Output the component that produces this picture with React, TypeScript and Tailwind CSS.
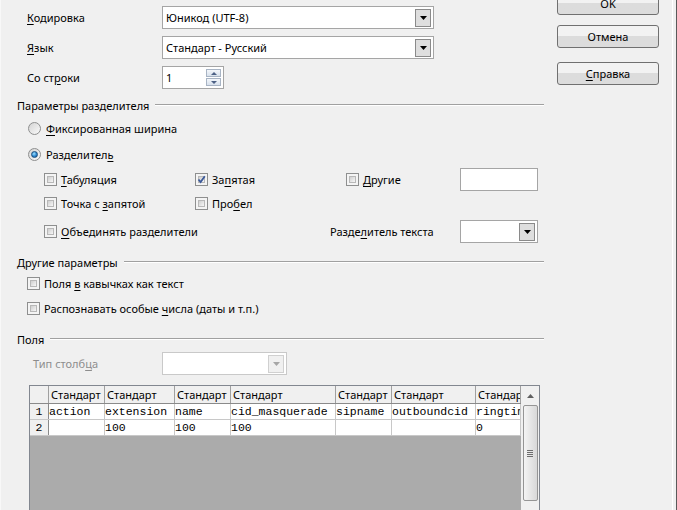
import React from 'react';

const Box = ({ checked }: { checked?: boolean }) => (
  <span className="relative flex h-[13px] w-[13px] shrink-0 border border-[#8e8f8f] bg-[#f4f4f4]">
    <span className="absolute inset-[2px] border border-[#b8b8b8] bg-linear-to-br from-[#cfcfcf] to-[#f7f7f7]" />
    {checked && (
      <svg className="absolute left-[1px] top-[1px]" width="9" height="9" viewBox="0 0 9 9">
        <path d="M1.5 4.5 L3.6 7 L7.8 1.2" fill="none" stroke="#3c5a9a" strokeWidth="1.8" />
      </svg>
    )}
  </span>
);

const Radio = ({ on }: { on?: boolean }) => (
  <span className="relative flex h-[13px] w-[13px] shrink-0 items-center justify-center rounded-full border border-[#8e8f8f] bg-linear-to-br from-[#d4d4d4] to-[#fafafa]">
    {on && (
      <span className="h-[7px] w-[7px] rounded-full border border-[#1b4f7e] bg-[radial-gradient(circle_at_40%_35%,#9fe2ff,#2b86cf_55%,#15508a)]" />
    )}
  </span>
);

const Arrow = ({ disabled }: { disabled?: boolean }) => (
  <span
    className={
      'flex h-[18px] w-[16px] items-center justify-center border ' +
      (disabled ? 'border-[#d0d0d0] bg-[#f0f0f0]' : 'border-[#8a8a8a] bg-[#dedede]')
    }
  >
    <svg width="7" height="4" viewBox="0 0 7 4">
      <path d="M0 0h7L3.5 4z" fill={disabled ? '#a6a6a6' : '#000'} />
    </svg>
  </span>
);

const Select = ({ value, width, disabled }: { value?: string; width: string; disabled?: boolean }) => (
  <div
    className={
      'flex h-[23px] items-center justify-between border bg-white pl-[3px] pr-[2px] ' +
      width +
      (disabled ? ' border-[#c9c9c9]' : ' border-[#a5a5a5]')
    }
  >
    <span className="whitespace-nowrap">{value}</span>
    <Arrow disabled={disabled} />
  </div>
);

const Section = ({ title, cls }: { title: string; cls: string }) => (
  <div className={'flex h-[16px] items-center gap-[6px] pl-[15px] ' + cls}>
    <span className="whitespace-nowrap">{title}</span>
    <div className="h-[2px] flex-1 border-t border-[#a0a0a0] border-b border-b-white" />
  </div>
);

const Btn = ({ children, cls = '' }: { children: React.ReactNode; cls?: string }) => (
  <div
    className={
      'flex h-[23px] w-[102px] shrink-0 items-center justify-center rounded-[3px] border border-[#707070] bg-linear-to-b from-[#f2f2f2] from-50% to-[#dcdcdc] to-50% ' +
      cls
    }
  >
    {children}
  </div>
);

const cols = [19, 56, 70, 56, 105, 56, 84, 45];
const head = ['', 'Стандарт', 'Стандарт', 'Стандарт', 'Стандарт', 'Стандарт', 'Стандарт', 'Стандарт'];
const rows = [
  ['1', 'action', 'extension', 'name', 'cid_masquerade', 'sipname', 'outboundcid', 'ringtime'],
  ['2', '', '100', '100', '100', '', '', '0'],
];

const Grid = () => (
  <div className="ml-[27px] mt-[10px] flex h-[150px] w-[511px] border border-[#828790] bg-[#ababab]">
    <div className="flex flex-1 flex-col overflow-hidden">
      <div className="flex h-[18px] shrink-0 border-b border-[#8a8a8a] bg-[#f0f0f0]">
        {head.map((h, i) => (
          <div
            key={i}
            style={{ width: cols[i] }}
            className="shrink-0 overflow-hidden whitespace-nowrap border-r border-[#a0a0a0] pl-[2px] leading-[17px]"
          >
            {h}
          </div>
        ))}
      </div>
      {rows.map((r, ri) => (
        <div key={ri} className="flex h-[16px] shrink-0 border-b border-[#c8c8c8] bg-white">
          {r.map((c, i) => (
            <div
              key={i}
              style={{ width: cols[i] }}
              className={
                'shrink-0 overflow-hidden whitespace-nowrap font-["Liberation_Mono",monospace] text-[11.5px] leading-[16px] ' +
                (i === 0
                  ? 'border-r border-[#8a8a8a] bg-[#f0f0f0] text-center'
                  : 'border-r border-[#c8c8c8]')
              }
            >
              {c}
            </div>
          ))}
        </div>
      ))}
    </div>
    <div className="flex w-[18px] shrink-0 flex-col items-center bg-[#f0f0f0]">
      <div className="flex h-[19px] shrink-0 items-center justify-center">
        <svg width="7" height="4" viewBox="0 0 7 4">
          <path d="M0 4h7L3.5 0z" fill="#606060" />
        </svg>
      </div>
      <div className="flex h-[96px] w-[15px] shrink-0 items-center justify-center rounded-[2px] border border-[#959595] bg-linear-to-r from-[#f4f4f4] to-[#d8d8d8]">
        <div className="flex w-[6px] flex-col gap-[1px]">
          <div className="h-px bg-[#6e6e6e]" />
          <div className="h-px bg-[#6e6e6e]" />
          <div className="h-px bg-[#6e6e6e]" />
          <div className="h-px bg-[#6e6e6e]" />
        </div>
      </div>
    </div>
  </div>
);

export default function App() {
  return (
    <div className="flex h-[510px] w-[677px] overflow-hidden bg-[#f0f0f0] font-['Noto_Sans',sans-serif] text-[11px] leading-none text-black">
      <div className="w-[2px] shrink-0 border-l border-[#f8f8f8]" />
      {/* left column: plain block flow so rows keep their heights */}
      <div className="w-[542px] shrink-0 pt-[6px]">
        <div className="flex h-[23px] items-center pl-[25px]">
          <span className="w-[135px]">
            <u className="underline-offset-2">К</u>одировка
          </span>
          <Select value="Юникод (UTF-8)" width="w-[272px]" />
        </div>
        <div className="mt-[7px] flex h-[23px] items-center pl-[25px]">
          <span className="w-[135px]">
            <u className="underline-offset-2">Я</u>зык
          </span>
          <Select value="Стандарт - Русский" width="w-[272px]" />
        </div>
        <div className="mt-[7px] flex h-[23px] items-center pl-[25px]">
          <span className="w-[135px]">
            Со ст<u className="underline-offset-2">р</u>оки
          </span>
          <div className="flex h-[23px] w-[62px] items-center justify-between border border-[#a5a5a5] bg-white pl-[3px] pr-[2px]">
            <span>1</span>
            <div className="flex flex-col gap-[1px]">
              {[0, 1].map((k) => (
                <div
                  key={k}
                  className="flex h-[8px] w-[15px] items-center justify-center border border-[#a8b4c4] bg-linear-to-b from-[#f4f7fb] to-[#d8e1ec]"
                >
                  <svg width="6" height="3" viewBox="0 0 6 3">
                    <path d={k === 0 ? 'M0 3h6L3 0z' : 'M0 0h6L3 3z'} fill="#4d6185" />
                  </svg>
                </div>
              ))}
            </div>
          </div>
        </div>

        <Section title="Параметры разделителя" cls="mt-[8px]" />
        <div className="mt-[5px] flex h-[20px] items-center gap-[5px] pl-[26px]">
          <Radio />
          <span>
            <u className="underline-offset-2">Ф</u>иксированная ширина
          </span>
        </div>
        <div className="mt-[6px] flex h-[20px] items-center gap-[5px] pl-[26px]">
          <Radio on />
          <span>
            Разделител<u className="underline-offset-2">ь</u>
          </span>
        </div>
        <div className="mt-[4px] grid h-[23px] grid-cols-[151px_151px_114px_78px] items-center pl-[42px]">
          <div className="flex items-center gap-[4px]">
            <Box />
            <span>
              <u className="underline-offset-2">Т</u>абуляция
            </span>
          </div>
          <div className="flex items-center gap-[4px]">
            <Box checked />
            <span>
              За<u className="underline-offset-2">п</u>ятая
            </span>
          </div>
          <div className="flex items-center gap-[4px]">
            <Box />
            <span>
              <u className="underline-offset-2">Д</u>ругие
            </span>
          </div>
          <div className="h-[23px] border border-[#a5a5a5] bg-white" />
        </div>
        <div className="mt-[2px] grid h-[20px] grid-cols-[151px_151px] items-center pl-[42px]">
          <div className="flex items-center gap-[4px]">
            <Box />
            <span>
              Точка с <u className="underline-offset-2">з</u>апятой
            </span>
          </div>
          <div className="flex items-center gap-[4px]">
            <Box />
            <span>
              Про<u className="underline-offset-2">б</u>ел
            </span>
          </div>
        </div>
        <div className="mt-[7px] grid h-[23px] grid-cols-[286px_130px_78px] items-center pl-[42px]">
          <div className="flex items-center gap-[4px]">
            <Box />
            <span>
              <u className="underline-offset-2">О</u>бъединять разделители
            </span>
          </div>
          <span>
            Разде<u className="underline-offset-2">л</u>итель текста
          </span>
          <Select width="w-[78px]" />
        </div>

        <Section title="Другие параметры" cls="mt-[11px]" />
        <div className="mt-[3px] flex h-[20px] items-center gap-[4px] pl-[25px]">
          <Box />
          <span>
            Поля <u className="underline-offset-2">в</u> кавычках как текст
          </span>
        </div>
        <div className="mt-[5px] flex h-[20px] items-center gap-[4px] pl-[25px]">
          <Box />
          <span>
            Распознавать особые <u className="underline-offset-2">ч</u>исла (даты и т.п.)
          </span>
        </div>

        <Section title="Поля" cls="mt-[13px]" />
        <div className="mt-[5px] flex h-[23px] items-center pl-[31px]">
          <span className="w-[129px] text-[#8d8d8d]">
            Тип столб<u className="underline-offset-2">ц</u>а
          </span>
          <Select width="w-[125px]" disabled />
        </div>
        <Grid />
      </div>

      <div className="ml-[13px] -mt-[8px] flex w-[102px] shrink-0 flex-col">
        <Btn>OK</Btn>
        <Btn cls="mt-[10px]">Отмена</Btn>
        <Btn cls="mt-[14px]">
          <span>
            <u className="underline-offset-2">С</u>правка
          </span>
        </Btn>
      </div>
      <div className="flex-1" />
      <div className="w-[5px] shrink-0 border-l border-white border-r border-r-[#5a5a5a]" />
    </div>
  );
}
